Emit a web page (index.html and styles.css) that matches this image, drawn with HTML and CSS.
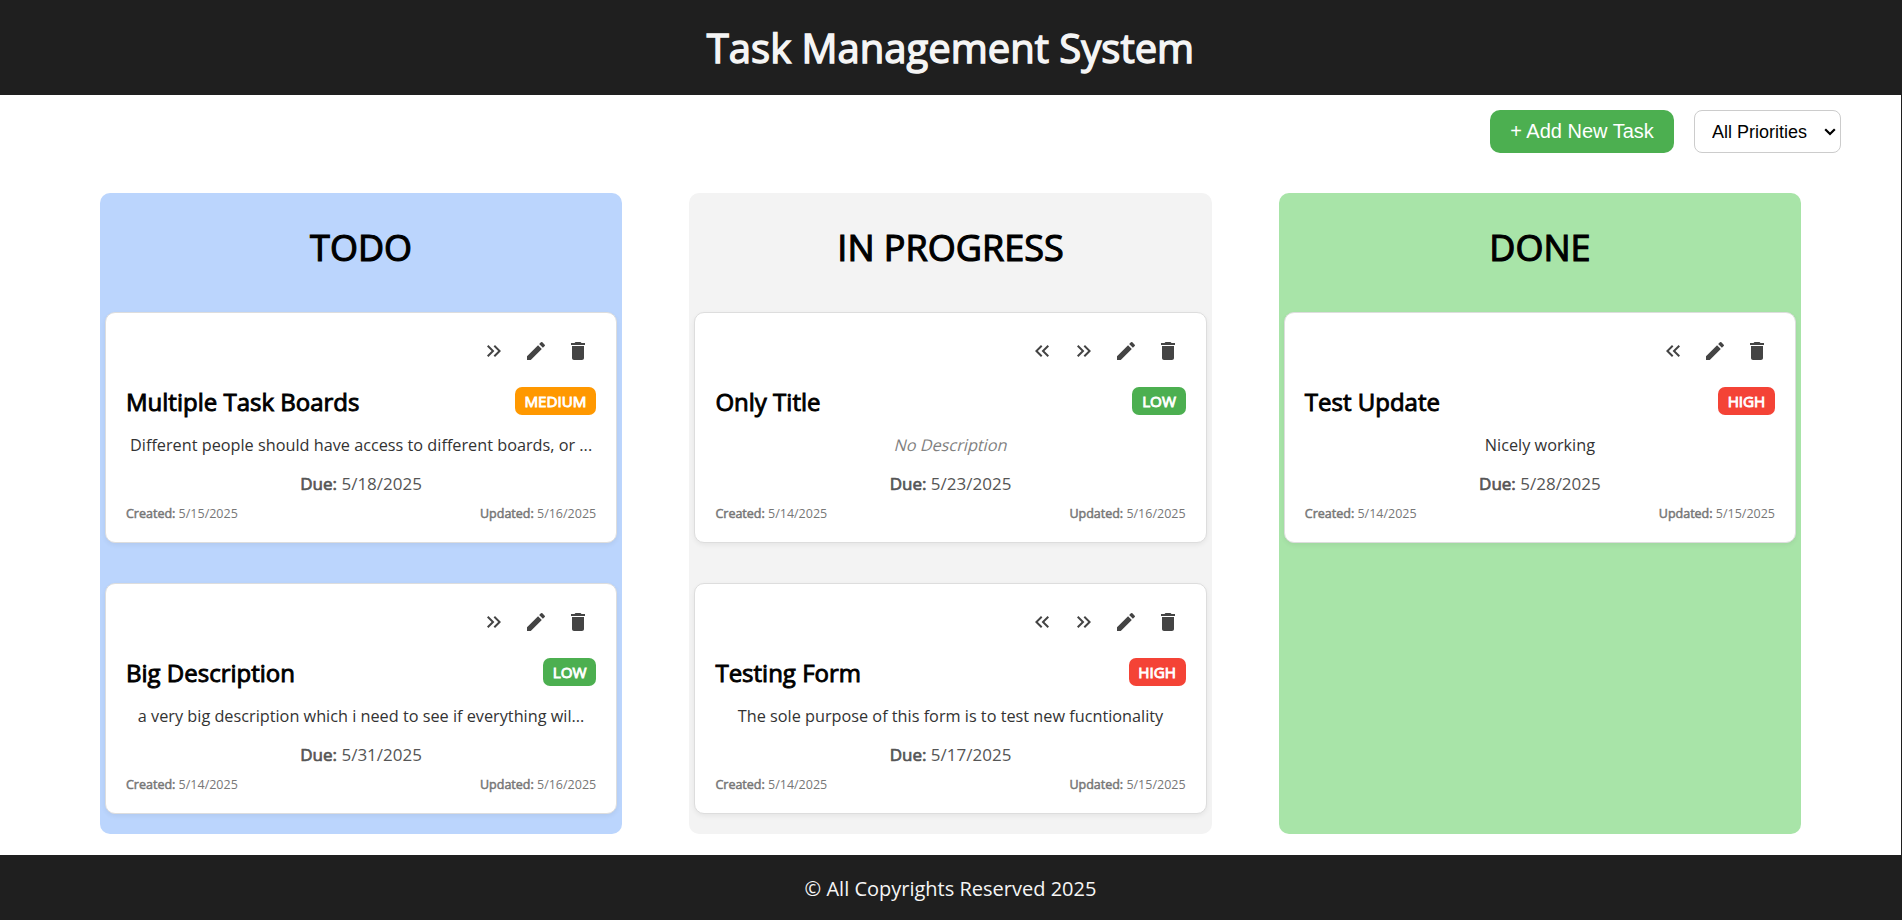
FILE: index.html
```
<!DOCTYPE html>
<html lang="en">
<head>
<meta charset="utf-8">
<title>Task Management System</title>
<link rel="stylesheet" href="styles.css">
</head>
<body>
<svg class="sprite" aria-hidden="true">
  <symbol id="back" viewBox="0 0 24 24"><path d="M17.59 18 19 16.59 14.42 12 19 7.41 17.59 6l-6 6z"/><path d="m11 18 1.41-1.41L7.83 12l4.58-4.59L11 6l-6 6z"/></symbol>
  <symbol id="next" viewBox="0 0 24 24"><path d="M6.41 6 5 7.41 9.58 12 5 16.59 6.41 18l6-6z"/><path d="m13 6-1.41 1.41L16.17 12l-4.58 4.59L13 18l6-6z"/></symbol>
  <symbol id="edit" viewBox="0 0 24 24"><path d="M3 17.25V21h3.75L17.81 9.94l-3.75-3.75L3 17.25zM20.71 7.04a.996.996 0 0 0 0-1.41l-2.34-2.34a.996.996 0 0 0-1.41 0l-1.83 1.83 3.75 3.75 1.83-1.83z"/></symbol>
  <symbol id="trash" viewBox="0 0 24 24"><path d="M6 19c0 1.1.9 2 2 2h8c1.1 0 2-.9 2-2V7H6v12zM19 4h-3.5l-1-1h-5l-1 1H5v2h14V4z"/></symbol>
</svg>
<div class="app">
  <header class="header"><h1 class="heading">Task Management System</h1></header>
  <div class="toolbar">
    <button class="add">+ Add New Task</button>
    <div class="filter-wrap">
      <select class="filter"><option>All Priorities</option><option>Low</option><option>Medium</option><option>High</option></select>
      <svg class="chevron" viewBox="0 0 12 8"><path d="M1.2 1.2 6 6l4.8-4.8"/></svg>
    </div>
  </div>
  <main class="board">
    <section class="column todo">
      <h2 class="column-title">TODO</h2>
      <div class="cards">
        <article class="card">
          <div class="actions"><svg class="icon"><use href="#next"/></svg><svg class="icon"><use href="#edit"/></svg><svg class="icon"><use href="#trash"/></svg></div>
          <div class="title-row"><h3 class="title">Multiple Task Boards</h3><span class="badge medium">MEDIUM</span></div>
          <p class="desc">Different people should have access to different boards, or ...</p>
          <p class="due"><b>Due:</b> 5/18/2025</p>
          <div class="dates"><span><b>Created:</b> 5/15/2025</span><span><b>Updated:</b> 5/16/2025</span></div>
        </article>
        <article class="card">
          <div class="actions"><svg class="icon"><use href="#next"/></svg><svg class="icon"><use href="#edit"/></svg><svg class="icon"><use href="#trash"/></svg></div>
          <div class="title-row"><h3 class="title">Big Description</h3><span class="badge low">LOW</span></div>
          <p class="desc">a very big description which i need to see if everything wil...</p>
          <p class="due"><b>Due:</b> 5/31/2025</p>
          <div class="dates"><span><b>Created:</b> 5/14/2025</span><span><b>Updated:</b> 5/16/2025</span></div>
        </article>
      </div>
    </section>
    <section class="column progress">
      <h2 class="column-title">IN PROGRESS</h2>
      <div class="cards">
        <article class="card">
          <div class="actions"><svg class="icon"><use href="#back"/></svg><svg class="icon"><use href="#next"/></svg><svg class="icon"><use href="#edit"/></svg><svg class="icon"><use href="#trash"/></svg></div>
          <div class="title-row"><h3 class="title">Only Title</h3><span class="badge low">LOW</span></div>
          <p class="desc empty">No Description</p>
          <p class="due"><b>Due:</b> 5/23/2025</p>
          <div class="dates"><span><b>Created:</b> 5/14/2025</span><span><b>Updated:</b> 5/16/2025</span></div>
        </article>
        <article class="card">
          <div class="actions"><svg class="icon"><use href="#back"/></svg><svg class="icon"><use href="#next"/></svg><svg class="icon"><use href="#edit"/></svg><svg class="icon"><use href="#trash"/></svg></div>
          <div class="title-row"><h3 class="title">Testing Form</h3><span class="badge high">HIGH</span></div>
          <p class="desc">The sole purpose of this form is to test new fucntionality</p>
          <p class="due"><b>Due:</b> 5/17/2025</p>
          <div class="dates"><span><b>Created:</b> 5/14/2025</span><span><b>Updated:</b> 5/15/2025</span></div>
        </article>
      </div>
    </section>
    <section class="column done">
      <h2 class="column-title">DONE</h2>
      <div class="cards">
        <article class="card">
          <div class="actions"><svg class="icon"><use href="#back"/></svg><svg class="icon"><use href="#edit"/></svg><svg class="icon"><use href="#trash"/></svg></div>
          <div class="title-row"><h3 class="title">Test Update</h3><span class="badge high">HIGH</span></div>
          <p class="desc">Nicely working</p>
          <p class="due"><b>Due:</b> 5/28/2025</p>
          <div class="dates"><span><b>Created:</b> 5/14/2025</span><span><b>Updated:</b> 5/15/2025</span></div>
        </article>
      </div>
    </section>
  </main>
  <footer class="footer">© All Copyrights Reserved 2025</footer>
</div>
</body>
</html>
```
FILE: styles.css
```
* { box-sizing: border-box; margin: 0; padding: 0; }
body { font-family: "Open Sans", sans-serif; font-size: 16px; background: #fff; color: #000; overflow: hidden; }
.sprite { display: none; }
.app { display: flex; flex-direction: column; height: 920px; border-right: 1px solid #1f1f1f; }
h1, h2, h3, b, .badge { font-weight: 400; -webkit-text-stroke: 0.04em currentColor; }
.header { height: 95px; padding: 20px; background: #1f1f1f; color: #f5f5f5; text-align: center; }
.heading { font-size: 40px; line-height: 55px; -webkit-text-stroke-width: 1.4px; }
.toolbar { display: flex; justify-content: flex-end; gap: 20px; height: 98px; padding: 15px 60px 40px 0; }
.add { width: 184px; height: 43px; border: 0; border-radius: 10px; background: #4caf50; color: #fff; font: 20px "Liberation Sans", Arial, sans-serif; }
.filter-wrap { display: grid; align-items: center; width: 147px; height: 43px; }
.filter { grid-area: 1 / 1; appearance: none; width: 147px; height: 43px; padding: 0 17px; border: 1px solid #ccc; border-radius: 8px; background: #fff; color: #000; font: 18px "Liberation Sans", Arial, sans-serif; }
.chevron { grid-area: 1 / 1; justify-self: end; width: 12px; height: 8px; margin-right: 5px; fill: none; stroke: #000; stroke-width: 2.2; pointer-events: none; }
.board { display: flex; justify-content: space-between; height: 641px; padding: 0 100px; }
.column { width: 522.2px; padding: 0 5px; border-radius: 10px; }
.todo { background: #bbd5fd; }
.progress { background: #f3f3f3; }
.done { background: #a8e4a8; }
.column-title { padding-top: 30px; height: 119px; font-size: 36px; line-height: 49px; text-align: center; -webkit-text-stroke-width: 1.15px; }
.cards { display: flex; flex-direction: column; gap: 40.5px; }
.card { height: 230.5px; padding: 20px; background: #fff; border: 1px solid #ddd; border-radius: 10px; box-shadow: 0 2px 5px rgba(0, 0, 0, .06); }
.actions { display: flex; justify-content: flex-end; gap: 18px; padding: 6px; height: 36px; }
.icon { width: 24px; height: 24px; fill: #444; }
.title-row { display: flex; justify-content: space-between; align-items: flex-start; margin-top: 16px; height: 33px; }
.title { font-size: 24px; line-height: 33px; -webkit-text-stroke-width: .9px; }
.badge { margin-top: 2px; height: 28px; padding: 0 9.7px; border-radius: 7px; color: #fff; font-size: 15.2px; line-height: 28px; -webkit-text-stroke-width: .9px; }
.medium { background: #ff9800; }
.low { background: #4caf50; }
.high { background: #f44336; }
.desc { margin-top: 16px; line-height: 22px; font-size: 16.25px; color: #333; text-align: center; white-space: nowrap; }
.desc.empty { color: #808080; transform: skewX(-14deg); transform-origin: 50% 75%; }
.due { margin-top: 17px; line-height: 22px; font-size: 17px; color: #555; text-align: center; }
.dates { display: flex; justify-content: space-between; margin-top: 10px; line-height: 18px; font-size: 12.5px; color: #777; }
.footer { height: 65px; margin-top: auto; background: #1f1f1f; color: #f5f5f5; text-align: center; font-size: 20px; line-height: 67px; }
```
